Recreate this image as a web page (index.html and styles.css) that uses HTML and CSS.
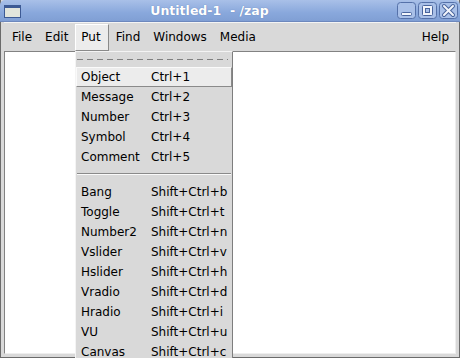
FILE: index.html
```html
<!DOCTYPE html>
<html lang="en">
<head>
  <meta charset="UTF-8" />
  <title>Untitled-1 - /zap</title>
  <link rel="stylesheet" href="styles.css">
</head>
<body>

  <div class="window">

    <!-- Title bar -->
    <div class="titlebar">
      <svg class="win-icon" viewBox="0 0 18 14" xmlns="http://www.w3.org/2000/svg">
        <rect x="0.5" y="0.5" width="16" height="12" fill="#e2e5dc" stroke="#3d5a94"/>
        <rect x="1" y="1" width="15" height="2" fill="#3d5a94"/>
      </svg>
      <div class="title">Untitled-1  - /zap</div>
      <div class="win-buttons">
        <svg class="win-btn" viewBox="0 0 19 17" xmlns="http://www.w3.org/2000/svg">
          <rect x="0.5" y="0.5" width="18" height="16" rx="3" fill="#a9c0e8" stroke="#5571a9"/>
          <rect x="4.5" y="10.5" width="10" height="3" rx="1" fill="#f2f5fb" stroke="#4a659d"/>
        </svg>
        <svg class="win-btn" viewBox="0 0 19 17" xmlns="http://www.w3.org/2000/svg">
          <rect x="0.5" y="0.5" width="18" height="16" rx="3" fill="#a9c0e8" stroke="#5571a9"/>
          <rect x="4.5" y="3.5" width="10" height="10" rx="1" fill="#f2f5fb" stroke="#4a659d"/>
          <rect x="7.5" y="6.5" width="4" height="4" fill="#a9c0e8" stroke="#4a659d"/>
        </svg>
        <svg class="win-btn" viewBox="0 0 19 17" xmlns="http://www.w3.org/2000/svg">
          <rect x="0.5" y="0.5" width="18" height="16" rx="3" fill="#a9c0e8" stroke="#5571a9"/>
          <path d="M5 4 L14 13 M14 4 L5 13" stroke="#4a659d" stroke-width="4" stroke-linecap="round"/>
          <path d="M5 4 L14 13 M14 4 L5 13" stroke="#f2f5fb" stroke-width="2" stroke-linecap="round"/>
        </svg>
      </div>
    </div>

    <!-- Menu bar -->
    <div class="menubar">
      <span class="menubar-item">File</span>
      <span class="menubar-item">Edit</span>
      <span class="menubar-item active">Put</span>
      <span class="menubar-item">Find</span>
      <span class="menubar-item">Windows</span>
      <span class="menubar-item">Media</span>
      <span class="menubar-item help">Help</span>
    </div>

    <!-- Patch canvas -->
    <div class="canvas"></div>
  </div>

  <!-- Put menu -->
  <div class="menu">
    <div class="tearoff"></div>
    <div class="menu-row active"><span>Object</span><span>Ctrl+1</span></div>
    <div class="menu-row"><span>Message</span><span>Ctrl+2</span></div>
    <div class="menu-row"><span>Number</span><span>Ctrl+3</span></div>
    <div class="menu-row"><span>Symbol</span><span>Ctrl+4</span></div>
    <div class="menu-row"><span>Comment</span><span>Ctrl+5</span></div>
    <div class="menu-sep"></div>
    <div class="menu-row"><span>Bang</span><span>Shift+Ctrl+b</span></div>
    <div class="menu-row"><span>Toggle</span><span>Shift+Ctrl+t</span></div>
    <div class="menu-row"><span>Number2</span><span>Shift+Ctrl+n</span></div>
    <div class="menu-row"><span>Vslider</span><span>Shift+Ctrl+v</span></div>
    <div class="menu-row"><span>Hslider</span><span>Shift+Ctrl+h</span></div>
    <div class="menu-row"><span>Vradio</span><span>Shift+Ctrl+d</span></div>
    <div class="menu-row"><span>Hradio</span><span>Shift+Ctrl+i</span></div>
    <div class="menu-row"><span>VU</span><span>Shift+Ctrl+u</span></div>
    <div class="menu-row"><span>Canvas</span><span>Shift+Ctrl+c</span></div>
  </div>

</body>
</html>
```

FILE: styles.css
```css
* { box-sizing: border-box; margin: 0; padding: 0; }
html, body { height: 100%; overflow: hidden; }
body {
  font-family: 'DejaVu Sans', sans-serif;
  font-size: 12px;
  color: #000;
  background: #fff;
}

/* WINDOW FRAME */
.window {
  display: flex;
  flex-direction: column;
  width: 460px;
  height: 358px;
  background: #d9d9d9;
  border: 1px solid #6b6b6b;
  border-top: none;
}

/* TITLE BAR */
.titlebar {
  display: flex;
  align-items: center;
  height: 22px;
  margin: 0 -1px;
  padding: 0 2px 0 4px;
  border-radius: 5px 5px 0 0;
  background: linear-gradient(#a9c0e8, #89a8dc 60%, #809fd4);
  border-bottom: 1px solid #6d88bd;
}
.win-icon {
  width: 18px;
  height: 14px;
  margin-top: 2px;
}
.title {
  flex: 1;
  text-align: center;
  white-space: pre;
  color: #fff;
  font-weight: bold;
  font-size: 12.5px;
  text-shadow: 0 0 1px #5a77ad;
}
.win-buttons {
  display: flex;
  gap: 2px;
}
.win-btn {
  width: 19px;
  height: 17px;
}

/* MENU BAR */
.menubar {
  display: flex;
  gap: 1px;
  height: 29px;
  margin: 0 3px;
  padding: 1px 0 0 2px;
  border-top: 1px solid #f4f4f4;
}
.menubar-item {
  padding: 0 5px 2px;
  line-height: 24px;
  border: 1px solid transparent;
}
.menubar-item.active {
  padding-right: 7px;
  background: #ececec;
  border-color: #fff #8a8a8a #8a8a8a #fff;
}
.menubar-item.help {
  margin-left: auto;
  margin-right: 1px;
}

/* CANVAS */
.canvas {
  flex: 1;
  margin: 0 3px 3px;
  background: #fff;
  border: 1px solid;
  border-color: #828282 #eeeeee #eeeeee #828282;
}

/* DROPDOWN MENU */
.menu {
  position: absolute;
  top: 51px;
  left: 75px;
  width: 158px;
  background: #d9d9d9;
  border: 1px solid;
  border-color: #f4f4f4 #7e7e7e #7e7e7e #f4f4f4;
}
.tearoff {
  height: 15px;
  margin: 0 4px 0 1px;
  background: repeating-linear-gradient(90deg, #808080 0 6px, transparent 6px 10px) 0 7px / 100% 1px no-repeat;
}
.menu-row {
  display: grid;
  grid-template-columns: 70px auto;
  height: 20px;
  padding-left: 4px;
  line-height: 18px;
  border: 1px solid transparent;
  white-space: nowrap;
}
.menu-row.active {
  background: #ececec;
  border-color: #fafafa #8a8a8a #8a8a8a #fafafa;
}
.menu-sep {
  height: 15px;
  margin: 0 1px;
  background:
    linear-gradient(#8a8a8a, #8a8a8a) 0 6px / 100% 1px no-repeat,
    linear-gradient(#fafafa, #fafafa) 0 7px / 100% 1px no-repeat;
}
```
